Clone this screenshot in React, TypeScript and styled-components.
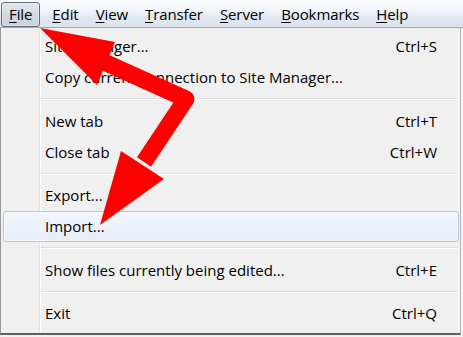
import React from "react";
import styled, { createGlobalStyle } from "styled-components";

const GlobalStyle = createGlobalStyle`
  html, body { margin: 0; padding: 0; background: #f2f2f2; }
  body { font-family: "Segoe UI", "Open Sans", sans-serif; }
`;

const Screen = styled.div`
  position: relative;
  width: 463px;
  height: 337px;
  overflow: hidden;
  background: #f2f2f2;
  font-family: "Segoe UI", "Open Sans", sans-serif;
  font-size: 15px;
  color: #000;
`;

const MenuBar = styled.div`
  display: flex;
  align-items: flex-start;
  gap: 1px;
  height: 27px;
  padding-left: 2px;
  box-sizing: content-box;
  border-bottom: 1px solid #a3a9b1;
  background: linear-gradient(#fbfcfe 0%, #f1f5fa 40%, #e3e9f2 60%, #dce3ed 100%);
`;

const MenuTitle = styled.div<{ $active?: boolean }>`
  margin-top: 2px;
  height: 23px;
  padding: 0 7px;
  display: flex;
  align-items: center;
  border: 1px solid ${(p) => (p.$active ? "#626a74" : "transparent")};
  border-radius: 3px;
  background: ${(p) =>
    p.$active ? "linear-gradient(#e2e7ee, #d2d9e2 50%, #c9d1dc)" : "transparent"};
  box-shadow: ${(p) => (p.$active ? "inset 0 0 0 1px rgba(255,255,255,0.35)" : "none")};
  line-height: 1;
  white-space: nowrap;
  letter-spacing: -0.1px;
  margin-left: ${(p) => (p.$active ? "-1px" : "0")};
  margin-right: ${(p) => (p.$active ? "3px" : "0")};
`;

const Key = styled.span`
  text-decoration: underline;
  text-underline-offset: 2px;
`;

const Panel = styled.div`
  width: 459px;
  height: 302px;
  box-sizing: content-box;
  padding-top: 3px;
  border-left: 1px solid #979797;
  border-right: 1px solid #b9b9b9;
  border-bottom: 2px solid #5f5f5f;
  background-color: #f0f0f0;
  background-image: linear-gradient(
    to right,
    transparent 38px,
    #e2e3e3 38px,
    #e2e3e3 39px,
    #ffffff 39px,
    #ffffff 40px,
    transparent 40px
  );
  display: flex;
  flex-direction: column;
`;

const Item = styled.div<{ $hover?: boolean }>`
  height: 31px;
  box-sizing: border-box;
  margin: 0 1px 0 2px;
  padding: 0 21px 0 41px;
  display: flex;
  align-items: center;
  justify-content: space-between;
  border: 1px solid ${(p) => (p.$hover ? "#a9c9ec" : "transparent")};
  border-radius: 3px;
  background: ${(p) =>
    p.$hover ? "linear-gradient(#f2f6fc, #e6eef9)" : "transparent"};
  box-shadow: ${(p) => (p.$hover ? "inset 0 0 0 1px rgba(255,255,255,0.6)" : "none")};
  white-space: nowrap;
`;

const Label = styled.span`
  line-height: 1;
`;

const Shortcut = styled.span`
  line-height: 1;
`;

const Separator = styled.div`
  height: 12.5px;
  margin: 0 2px 0 40px;
  display: flex;
  flex-direction: column;
  justify-content: center;
  &::before {
    content: "";
    display: block;
    height: 1px;
    background: #e0e0e0;
  }
  &::after {
    content: "";
    display: block;
    height: 1px;
    background: #ffffff;
  }
`;

const Annotation = styled.svg`
  position: absolute;
  left: 0;
  top: 0;
  pointer-events: none;
`;

const titles: { key: string; rest: string }[] = [
  { key: "F", rest: "ile" },
  { key: "E", rest: "dit" },
  { key: "V", rest: "iew" },
  { key: "T", rest: "ransfer" },
  { key: "S", rest: "erver" },
  { key: "B", rest: "ookmarks" },
  { key: "H", rest: "elp" },
];

type Entry =
  | { type: "item"; label: string; shortcut?: string; hover?: boolean }
  | { type: "sep" };

const entries: Entry[] = [
  { type: "item", label: "Site Manager...", shortcut: "Ctrl+S" },
  { type: "item", label: "Copy current connection to Site Manager..." },
  { type: "sep" },
  { type: "item", label: "New tab", shortcut: "Ctrl+T" },
  { type: "item", label: "Close tab", shortcut: "Ctrl+W" },
  { type: "sep" },
  { type: "item", label: "Export..." },
  { type: "item", label: "Import...", hover: true },
  { type: "sep" },
  { type: "item", label: "Show files currently being edited...", shortcut: "Ctrl+E" },
  { type: "sep" },
  { type: "item", label: "Exit", shortcut: "Ctrl+Q" },
];

export default function App() {
  return (
    <>
      <GlobalStyle />
      <Screen>
        <MenuBar>
          {titles.map((t, i) => (
            <MenuTitle key={t.key + t.rest} $active={i === 0}>
              <Key>{t.key}</Key>
              {t.rest}
            </MenuTitle>
          ))}
        </MenuBar>
        <Panel>
          {entries.map((e, i) =>
            e.type === "sep" ? (
              <Separator key={i} />
            ) : (
              <Item key={i} $hover={e.hover}>
                <Label>{e.label}</Label>
                {e.shortcut && <Shortcut>{e.shortcut}</Shortcut>}
              </Item>
            )
          )}
        </Panel>
        <Annotation width="463" height="337" viewBox="0 0 463 337">
          <polyline
            points="104,62 186,99 144,162"
            fill="none"
            stroke="#fe0000"
            strokeWidth="17"
            strokeLinejoin="round"
          />
          <polygon points="40,28 115,42 97,85" fill="#fe0000" />
          <polygon points="100,225 121,151 164,179" fill="#fe0000" />
        </Annotation>
      </Screen>
    </>
  );
}
